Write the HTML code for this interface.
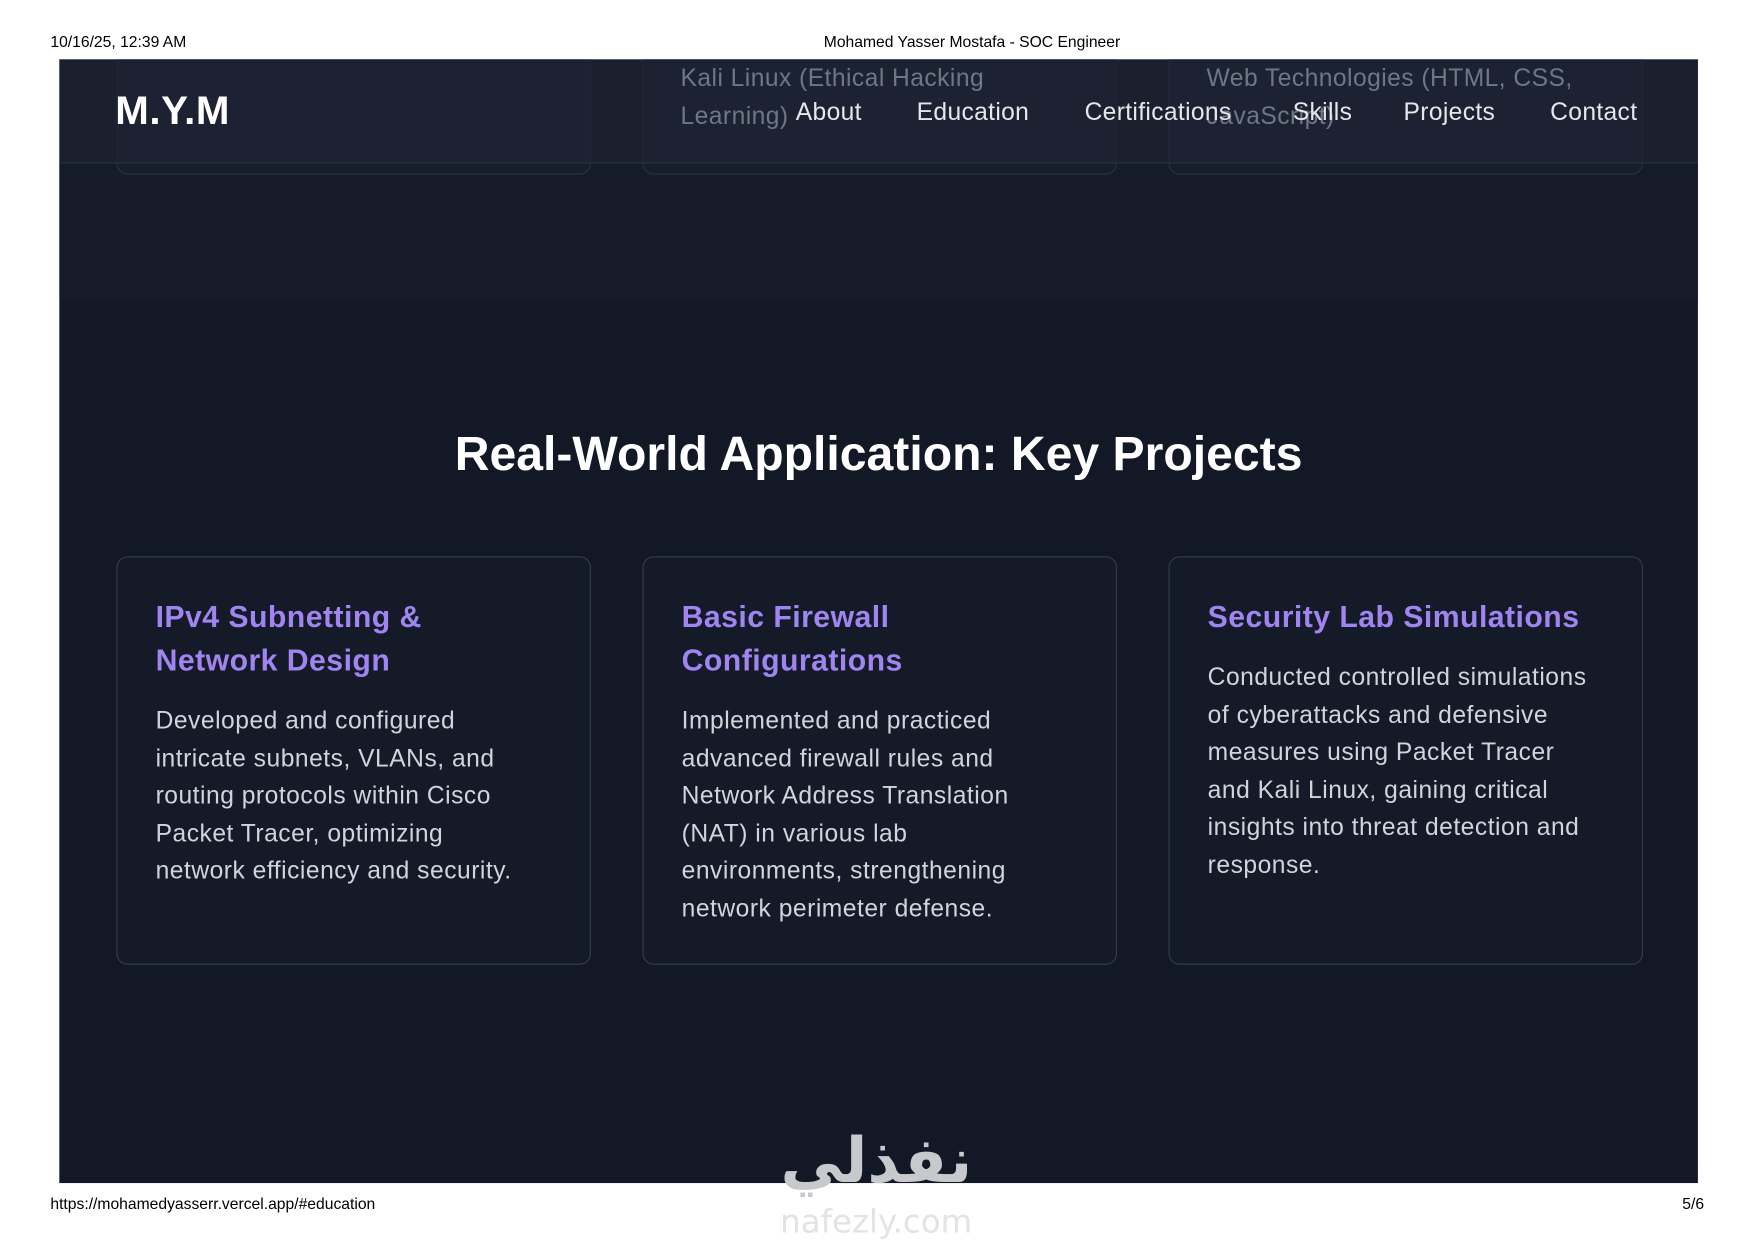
<!DOCTYPE html>
<html><head><meta charset="utf-8"><style>
html,body{margin:0;padding:0;background:#fff;width:1755px;height:1241px;overflow:hidden}
#w{position:absolute;left:0;top:0;width:1568px;height:1109px;transform:scale(1.11926);transform-origin:0 0;font-family:"Liberation Sans",Arial,sans-serif}
.a{position:absolute;white-space:nowrap}
.hdr{font-size:14px;color:#000;top:29px}
#panel{position:absolute;left:53px;top:53px;width:1464px;height:1004px;background:#131826;overflow:hidden}
.ghost{position:absolute;top:-20px;height:121px;width:422px;border:1px solid #2a3141;border-radius:10px;background:#171d2b}
.gt{position:absolute;top:0;font-size:22px;line-height:34px;color:#6f7685;white-space:nowrap;letter-spacing:0.4px}
#nav{position:absolute;left:0;top:0;width:1464px;height:92px;background:rgba(30,36,51,0.72);border-bottom:1px solid #2a3142}
.nl{position:absolute;top:34px;font-size:22px;color:#e5e7eb;letter-spacing:0.3px}
.card{position:absolute;top:444px;width:422px;height:363px;border:1px solid #353c4c;border-radius:10px;background:#141a28}
.ct{position:absolute;left:34px;top:34px;font-size:27px;line-height:39px;font-weight:bold;color:#a084f0;white-space:nowrap;letter-spacing:0.4px}
.cb{position:absolute;left:34px;font-size:22px;line-height:33.5px;color:#d1d5db;white-space:nowrap;letter-spacing:0.45px}
</style></head><body><div id="w">
<div class="a hdr" style="left:45px">10/16/25, 12:39 AM</div>
<div class="a hdr" style="left:736px">Mohamed Yasser Mostafa - SOC Engineer</div>
<div id="panel">
 <div style="position:absolute;left:0;top:92px;width:1464px;height:123px;background:#151b28"></div>
 <div class="ghost" style="left:51px"></div>
 <div class="ghost" style="left:521px"></div>
 <div class="ghost" style="left:991px"></div>
 <div id="nav">
  <div class="a" style="left:50px;top:25px;font-size:36px;font-weight:bold;color:#fff;letter-spacing:0.5px">M.Y.M</div>
 </div>
 <div class="gt" style="left:555px;top:0">Kali Linux (Ethical Hacking<br>Learning)</div>
 <div class="gt" style="left:1025px;top:0">Web Technologies (HTML, CSS,<br>JavaScript)</div>
 <div class="nl" style="left:658px">About</div>
 <div class="nl" style="left:766px">Education</div>
 <div class="nl" style="left:916px">Certifications</div>
 <div class="nl" style="left:1102px">Skills</div>
 <div class="nl" style="left:1201px">Projects</div>
 <div class="nl" style="left:1332px">Contact</div>
 <div class="a" style="left:0;width:1464px;text-align:center;top:329px;font-size:43px;font-weight:bold;color:#fff">Real-World Application: Key Projects</div>
 <div class="card" style="left:51px">
  <div class="ct">IPv4 Subnetting &amp;<br>Network Design</div>
  <div class="cb" style="top:129px">Developed and configured<br>intricate subnets, VLANs, and<br>routing protocols within Cisco<br>Packet Tracer, optimizing<br>network efficiency and security.</div>
 </div>
 <div class="card" style="left:521px">
  <div class="ct">Basic Firewall<br>Configurations</div>
  <div class="cb" style="top:129px">Implemented and practiced<br>advanced firewall rules and<br>Network Address Translation<br>(NAT) in various lab<br>environments, strengthening<br>network perimeter defense.</div>
 </div>
 <div class="card" style="left:991px">
  <div class="ct">Security Lab Simulations</div>
  <div class="cb" style="top:90px">Conducted controlled simulations<br>of cyberattacks and defensive<br>measures using Packet Tracer<br>and Kali Linux, gaining critical<br>insights into threat detection and<br>response.</div>
 </div>
</div>
<div class="a hdr" style="left:45px;top:1067px">https://mohamedyasserr.vercel.app/#education</div>
<div class="a hdr" style="left:1503px;top:1067px">5/6</div>
<div class="a" style="left:688px;top:1005px;width:190px;font-family:'DejaVu Sans',sans-serif;font-size:56px;font-weight:bold;color:#c8c9cc;direction:rtl;text-align:center">نفذلي</div>
<div class="a" style="left:697px;top:1074px;font-family:'DejaVu Sans',sans-serif;font-size:29px;color:#e2e3e5">nafezly.com</div>
</div></body></html>
